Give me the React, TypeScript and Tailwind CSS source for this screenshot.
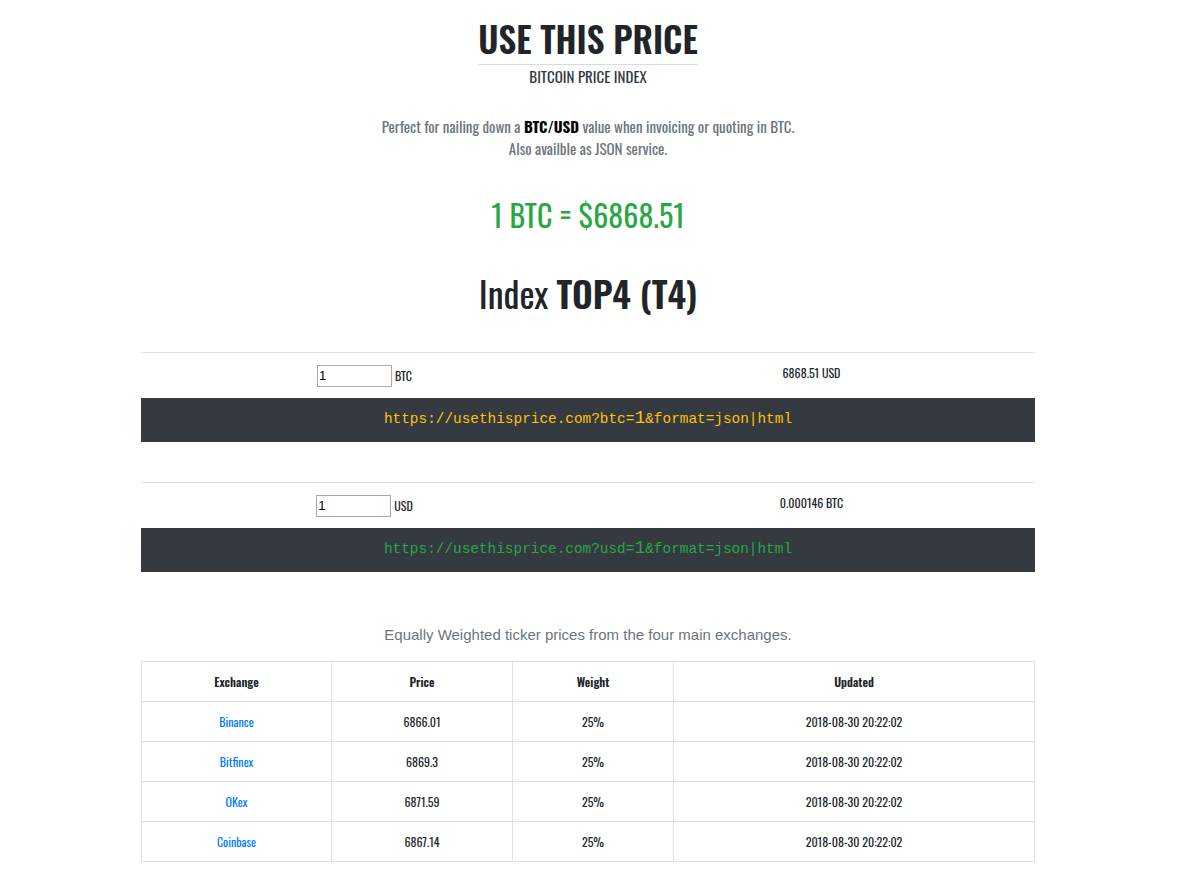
import React from "react";

const osw = "font-['Oswald','Liberation_Sans_Narrow','DejaVu_Sans_Condensed','DejaVu_Sans',sans-serif]";

const rows = [
  { ex: "Binance", price: "6866.01" },
  { ex: "Bitfinex", price: "6869.3" },
  { ex: "OKex", price: "6871.59" },
  { ex: "Coinbase", price: "6867.14" },
];

function Converter({ unit, result, url, color }: { unit: string; result: string; url: React.ReactNode; color: string }) {
  return (
    <div className="border-t border-[#dee2e6]">
      <div className="grid grid-cols-2 h-[45px]">
        <div className="flex items-center justify-center gap-[3px]">
          <input
            defaultValue="1"
            className="w-[75px] h-[22px] border border-[#a9a9a9] px-[1px] text-[13px] text-black font-['Liberation_Sans',sans-serif] outline-none"
          />
          <span className="text-[12px] text-[#212529]">{unit}</span>
        </div>
        <div className="flex items-start justify-center pt-[11px] text-[12px] text-[#212529]">{result}</div>
      </div>
      <div className={`bg-[#343a40] h-[44px] pb-[4px] flex items-center justify-center font-['Liberation_Mono','DejaVu_Sans_Mono',monospace] text-[14.4px] leading-none ${color}`}>
        {url}
      </div>
    </div>
  );
}

export default function App() {
  return (
    <div className={`w-[1176px] bg-white pb-[14px] ${osw} text-[#212529]`}>
      <div className="mx-auto w-[894px]">
        <div className="flex flex-col items-center pt-[14px]">
          <div className="border-b border-[#dcdcdc] pb-[2px]">
            <h1 className="text-[35px] leading-[48px] font-semibold text-[#212529]">USE THIS PRICE</h1>
          </div>
          <div className="text-[15px] leading-[24px] text-[#343a40] mt-[-1px]">BITCOIN PRICE INDEX</div>
        </div>
        <div className="mt-[27px] text-center text-[15px] leading-[22px] text-[#6c757d]">
          <p>
            Perfect for nailing down a <b className="text-black font-bold">BTC/USD</b> value when invoicing or quoting in BTC.
          </p>
          <p>Also availble as JSON service.</p>
        </div>
        <div className="mt-[36px] text-center text-[30px] leading-[40px] text-[#28a745]">1 BTC = $6868.51</div>
        <div className="mt-[34px] text-center text-[36px] leading-[48px] text-[#212529]">
          Index <span className="font-semibold">TOP4 (T4)</span>
        </div>
        <div className="mt-[35px]">
          <Converter
            unit="BTC"
            result="6868.51 USD"
            color="text-[#ffc107]"
            url={
              <span className="leading-none">
                https://usethisprice.com?btc=<span className="text-[18px] leading-none">1</span>&amp;format=json|html
              </span>
            }
          />
        </div>
        <div className="mt-[40px]">
          <Converter
            unit="USD"
            result="0.000146 BTC"
            color="text-[#28a745]"
            url={
              <span className="leading-none">
                https://usethisprice.com?usd=<span className="text-[18px] leading-none">1</span>&amp;format=json|html
              </span>
            }
          />
        </div>
        <p className="mt-[52px] text-center font-['Liberation_Sans',Arial,sans-serif] text-[15px] leading-[22px] text-[#6c757d]">
          Equally Weighted ticker prices from the four main exchanges.
        </p>
        <table className="mt-[15px] w-full border-collapse text-[12px] text-[#212529]">
          <colgroup>
            <col className="w-[190px]" />
            <col className="w-[181px]" />
            <col className="w-[161px]" />
            <col />
          </colgroup>
          <thead>
            <tr className="h-[40px]">
              {["Exchange", "Price", "Weight", "Updated"].map((h) => (
                <th key={h} className="border border-[#dee2e6] text-center font-semibold align-middle">{h}</th>
              ))}
            </tr>
          </thead>
          <tbody>
            {rows.map((r) => (
              <tr key={r.ex} className="h-[40px]">
                <td className="border border-[#dee2e6] text-center text-[#007bff]">{r.ex}</td>
                <td className="border border-[#dee2e6] text-center">{r.price}</td>
                <td className="border border-[#dee2e6] text-center">25%</td>
                <td className="border border-[#dee2e6] text-center">2018-08-30 20:22:02</td>
              </tr>
            ))}
          </tbody>
        </table>
      </div>
    </div>
  );
}
